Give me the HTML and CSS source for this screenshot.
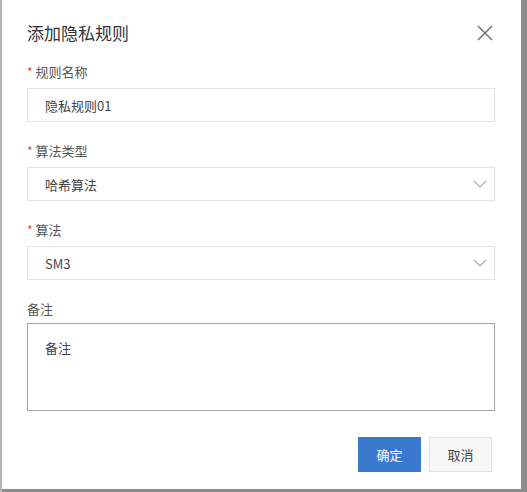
FILE: index.html
```html
<!DOCTYPE html>
<html lang="zh-CN">
<head>
  <meta charset="UTF-8">
  <meta name="viewport" content="width=device-width, initial-scale=1.0">
  <title>添加隐私规则</title>
  <link rel="stylesheet" href="styles.css">
</head>
<body>
  <div class="dialog">
    <div class="dialog-header">
      <h2 class="dialog-title">添加隐私规则</h2>
      <button class="close-btn" aria-label="关闭">
        <svg width="16" height="16" viewBox="0 0 16 16">
          <path d="M1 1 L15 15 M15 1 L1 15" stroke="#777" stroke-width="1.6" fill="none"/>
        </svg>
      </button>
    </div>

    <div class="form">
      <div class="field">
        <label class="label"><span class="req">*</span>规则名称</label>
        <div class="control">隐私规则01</div>
      </div>
      <div class="field">
        <label class="label"><span class="req">*</span>算法类型</label>
        <div class="control select">
          <span>哈希算法</span>
          <svg class="chevron" width="14" height="8" viewBox="0 0 14 8">
            <path d="M1 1 L7 7 L13 1" stroke="#aaa" stroke-width="1.2" fill="none"/>
          </svg>
        </div>
      </div>
      <div class="field">
        <label class="label"><span class="req">*</span>算法</label>
        <div class="control select">
          <span>SM3</span>
          <svg class="chevron" width="14" height="8" viewBox="0 0 14 8">
            <path d="M1 1 L7 7 L13 1" stroke="#aaa" stroke-width="1.2" fill="none"/>
          </svg>
        </div>
      </div>
      <div class="field">
        <label class="label">备注</label>
        <div class="control textarea">备注</div>
      </div>
    </div>

    <div class="dialog-footer">
      <button class="btn btn-primary">确定</button>
      <button class="btn btn-default">取消</button>
    </div>
  </div>
</body>
</html>
```

FILE: styles.css
```css
html, body {
  margin: 0;
  height: 100%;
}
body {
  background: #8c8c8c;
  border-left: 2px solid #b5b5b5;
  font-family: "Noto Sans CJK SC", "Noto Sans", sans-serif;
  color: #333;
  box-sizing: border-box;
}
.dialog {
  width: 519px;
  height: 489px;
  background: #fff;
  box-sizing: border-box;
  padding: 0 26px 0 25px;
  display: flex;
  flex-direction: column;
}
.dialog-header {
  display: flex;
  align-items: center;
  justify-content: space-between;
  height: 62px;
  padding-top: 3px;
  box-sizing: border-box;
}
.dialog-title {
  margin: 0;
  font-size: 17px;
  font-weight: normal;
  color: #333;
}
.close-btn {
  border: none;
  background: none;
  padding: 0;
  margin-right: 2px;
  cursor: pointer;
  display: flex;
}
.form {
  display: flex;
  flex-direction: column;
  gap: 19px;
}
.field {
  display: flex;
  flex-direction: column;
  gap: 7px;
}
.label {
  font-size: 13px;
  line-height: 19px;
  color: #555;
}
.req {
  color: #e0443c;
  margin-right: 3px;
  font-size: 12px;
}
.control {
  height: 34px;
  box-sizing: border-box;
  border: 1px solid #e3e3e3;
  padding: 0 17px;
  font-size: 13px;
  color: #444;
  display: flex;
  align-items: center;
}
.select {
  justify-content: space-between;
}
.chevron {
  margin-right: -10px;
}
.textarea {
  height: 88px;
  align-items: flex-start;
  padding-top: 14px;
  border-color: #a6a6a6;
  margin-top: -2px;
}
.dialog-footer {
  display: flex;
  justify-content: flex-end;
  gap: 8px;
  margin-top: 26px;
  padding-right: 3px;
}
.btn {
  width: 63px;
  height: 35px;
  font-family: inherit;
  font-size: 13px;
  border-radius: 0;
  cursor: pointer;
}
.btn-primary {
  background: #3a78d0;
  border: 1px solid #3a78d0;
  color: #fff;
}
.btn-default {
  background: #f7f7f7;
  border: 1px solid #e3e3e3;
  color: #444;
}
```
